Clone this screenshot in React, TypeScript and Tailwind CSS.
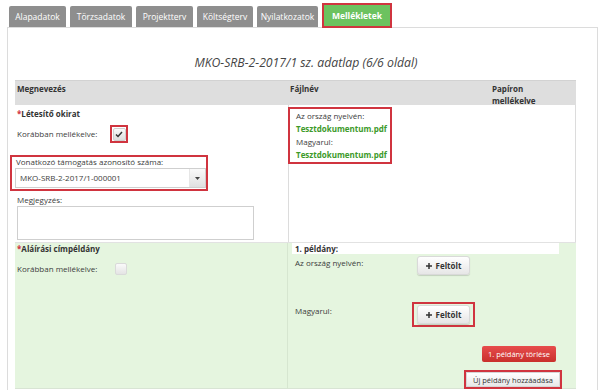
import React from "react";

const tabs: [string, number][] = [
  ["Alapadatok", 57],
  ["Törzsadatok", 62],
  ["Projektterv", 57],
  ["Költségterv", 56],
  ["Nyilatkozatok", 61],
];

function Plus() {
  return (
    <svg width="6" height="6" viewBox="0 0 8 8" className="inline-block">
      <path d="M3 0h2v3h3v2H5v3H3V5H0V3h3z" fill="#333" />
    </svg>
  );
}

function UploadBtn() {
  return (
    <div className="flex items-center justify-center gap-[4px] w-[53px] h-[19px] rounded-[3px] border border-[#d9d9d9] bg-gradient-to-b from-[#ffffff] to-[#e6e6e6] shadow-[0_1px_1px_rgba(0,0,0,0.15)] text-[8px] font-bold text-[#333]">
      <Plus />
      <span>Feltölt</span>
    </div>
  );
}

export default function App() {
  return (
    <div
      className="w-[604px] h-[390px] overflow-hidden bg-white text-[#3c3c3c] text-[8px] leading-[10px]"
      style={{ fontFamily: '"Open Sans", "DejaVu Sans", sans-serif' }}
    >
      {/* tabs */}
      <div className="relative z-10 flex items-end gap-[4px] pl-[9px] h-[27px]">
        {tabs.map(([t, w]) => (
          <div
            key={t}
            style={{ width: w }}
            className="h-[21px] flex items-center justify-center bg-[#8e8e8e] text-white text-[8.5px] rounded-t-[2px]"
          >
            {t}
          </div>
        ))}
        <div className="border-2 border-[#d0343f] h-[25px] w-[70px] flex -mb-[1px]">
          <div className="h-full w-full flex items-center justify-center bg-[#6cc25f] text-white font-bold text-[8.5px]">
            Mellékletek
          </div>
        </div>
      </div>

      {/* panel */}
      <div className="ml-[7px] w-[591px] h-[363px] border border-[#dcdcdc] border-b-0 pl-[7px]">
        <div className="h-[52px] flex items-end justify-center pb-[10px] italic text-[12.25px] leading-[14px] text-[#444]">
          MKO-SRB-2-2017/1 sz. adatlap (6/6 oldal)
        </div>

        {/* table */}
        <div className="w-[561px]">
          {/* header */}
          <div className="grid grid-cols-[273px_200px_88px] h-[25px] bg-[#dedede] border-t border-[#d2d2d2] font-bold leading-[12px] text-[#333]">
            <div className="pl-[2px] pt-[2px]">Megnevezés</div>
            <div className="pl-[2px] pt-[2px]">Fájlnév</div>
            <div className="pl-[4px] pt-[2px]">
              Papíron
              <br />
              mellékelve
            </div>
          </div>

          {/* row 1 */}
          <div className="grid grid-cols-[273px_288px] h-[138px] border-b border-[#e2e2e2]">
            <div className="pl-[2px] pt-[4px]">
              <div className="font-bold text-[#333]">
                <span className="text-[#d0343f]">*</span>Létesítő okirat
              </div>
              <div className="flex items-center mt-[6px] h-[18px]">
                <span>Korábban mellékelve:</span>
                <div className="ml-[13px] w-[18px] h-[18px] border-2 border-[#d0343f] flex items-center justify-center">
                  <div className="w-[13px] h-[13px] bg-gradient-to-b from-[#fafafa] to-[#dcdcdc] border border-[#cfcfcf] rounded-[2px] flex items-center justify-center">
                    <svg width="8" height="7" viewBox="0 0 8 7">
                      <path d="M1 3.5l2 2 4-4.5" stroke="#333" strokeWidth="1.5" fill="none" />
                    </svg>
                  </div>
                </div>
              </div>
              <div className="mt-[12px] -ml-[7px] w-[198px] h-[36px] border-2 border-[#d0343f] pl-[3px]">
                <div className="pl-[1px]">Vonatkozó támogatás azonosító száma:</div>
                <div className="mt-[1px] w-[191px] h-[20px] border border-[#cfcfcf] flex items-center bg-white">
                  <span className="pl-[4px] flex-1">MKO-SRB-2-2017/1-000001</span>
                  <div className="w-[16px] h-full bg-gradient-to-b from-[#fafafa] to-[#e0e0e0] border-l border-[#e6e6e6] flex items-center justify-center">
                    <svg width="5" height="3" viewBox="0 0 5 3">
                      <path d="M0 0h5L2.5 3z" fill="#444" />
                    </svg>
                  </div>
                </div>
              </div>
              <div className="mt-[4px]">Megjegyzés:</div>
              <div className="mt-[1px] w-[237px] h-[34px] border border-[#cfcfcf] bg-white" />
            </div>
            <div className="border-l border-r border-[#dcdcdc] pt-[2px]">
              <div className="-ml-[1px] w-[104px] h-[57px] border-2 border-[#d0343f] pl-[6px] leading-[13px]">
                <div>Az ország nyelvén:</div>
                <div className="font-bold text-[#3d9a2a]">Tesztdokumentum.pdf</div>
                <div>Magyarul:</div>
                <div className="font-bold text-[#3d9a2a]">Tesztdokumentum.pdf</div>
              </div>
            </div>
          </div>

          {/* row 2 */}
          <div className="grid grid-cols-[273px_288px] h-[146px] bg-[#e5f5df] border-b border-[#d8e4d4]">
            <div className="pl-[2px] pt-[1px] border-r border-[#d6e6d0]">
              <div className="font-bold text-[#333]">
                <span className="text-[#d0343f]">*</span>Aláírási címpéldány
              </div>
              <div className="flex items-center mt-[9px] h-[12px]">
                <span>Korábban mellékelve:</span>
                <div className="ml-[18px] w-[12px] h-[12px] bg-gradient-to-b from-[#fafafa] to-[#e4e4e4] border border-[#dadada] rounded-[2px]" />
              </div>
            </div>
            <div className="pl-[4px]">
              <div className="w-[267px] h-[11px] bg-white pl-[3px] pt-[1px] font-bold text-[#333]">1. példány:</div>
              <div className="flex mt-[2px]">
                <div className="w-[125px] pl-[3px] pt-[2px]">Az ország nyelvén:</div>
                <UploadBtn />
              </div>
              <div className="flex mt-[27px]">
                <div className="w-[120px] pl-[3px] pt-[4px]">Magyarul:</div>
                <div className="border-2 border-[#d0343f] w-[63px] h-[25px] flex items-center justify-center">
                  <UploadBtn />
                </div>
              </div>
              <div className="flex justify-end pr-[20px] mt-[19px]">
                <div className="h-[16px] w-[74px] flex items-center justify-center rounded-[2px] bg-gradient-to-b from-[#e74c4c] to-[#c9302c] text-white text-[7.5px]">
                  1. példány törlése
                </div>
              </div>
              <div className="flex justify-end pr-[14px] mt-[8px]">
                <div className="border-2 border-[#d0343f] h-[19px] w-[98px] flex items-center justify-center">
                  <div className="h-[15px] w-[94px] flex items-center justify-center bg-gradient-to-b from-[#ffffff] to-[#e8e8e8] border border-[#d6d6d6] text-[7.5px] text-[#333]">
                    Új példány hozzáadása
                  </div>
                </div>
              </div>
            </div>
          </div>
        </div>
      </div>
    </div>
  );
}
